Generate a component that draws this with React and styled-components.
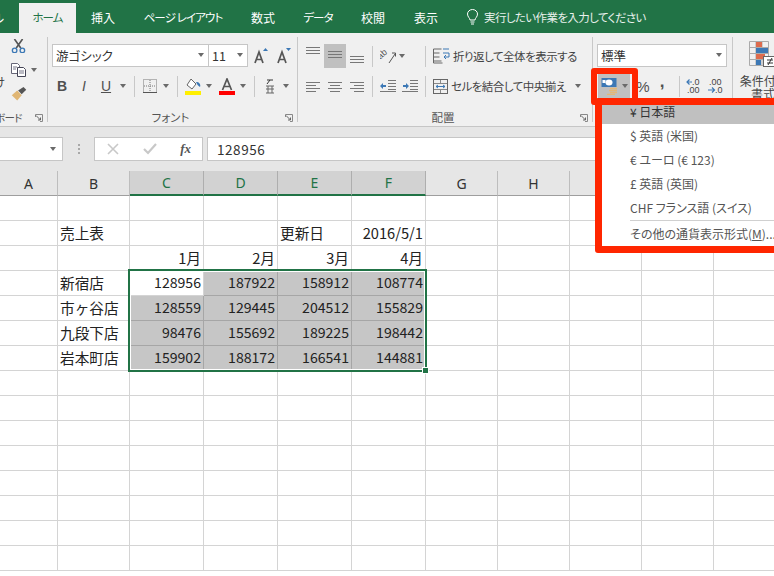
import React from "react"
import styled, { createGlobalStyle } from "styled-components"

const Global = createGlobalStyle`
	html, body { margin: 0; padding: 0; background: #fff; }
	body { font-family: "Noto Sans CJK JP", "Noto Sans", sans-serif; }
`

const Page = styled.div`
	position: relative;
	width: 774px;
	height: 576px;
	overflow: hidden;
	font-feature-settings: "palt";
`

const TabBar = styled.div`
	display: flex;
	align-items: flex-end;
	height: 33px;
	background: #217346;
	color: #fff;
	font-size: 12px;
`

const Tab = styled.div`
	flex: none;
	display: flex;
	align-items: center;
	justify-content: center;
	width: ${p => p.$w}px;
	height: 30px;
	padding-bottom: 2px;
	box-sizing: border-box;
	white-space: pre;
	overflow: hidden;
	font-size: ${p => (p.$kana ? "11.5px" : "12px")};
	letter-spacing: ${p => (p.$kana ? "-0.9px" : "0")};
	background: ${p => (p.$active ? "#f0f0f0" : "transparent")};
	color: ${p => (p.$active ? "#217346" : "#fff")};
`

const CutTab = styled(Tab)`
	justify-content: flex-end;
	padding-right: 15px;
`

const TellMe = styled.div`
	display: flex;
	align-items: center;
	gap: 5px;
	height: 30px;
	padding: 0 0 2px 14px;
	box-sizing: border-box;
	font-size: 11.5px;
	letter-spacing: -0.6px;
	color: #e8f0ec;
`

const Ribbon = styled.div`
	display: flex;
	height: 94px;
	padding-top: 4px;
	box-sizing: border-box;
	background: #f0f0f0;
	border-bottom: 1px solid #c6c6c6;
	color: #444;
	font-size: 12px;
	overflow: hidden;
`

const Group = styled.div`
	flex: none;
	display: flex;
	flex-direction: column;
	width: ${p => p.$w}px;
	height: 85px;
	padding-top: 7px;
	box-sizing: border-box;
	border-right: 1px solid #c8c8c8;
	white-space: nowrap;
`

const Rows = styled.div`
	display: flex;
	flex-direction: column;
	gap: 6px;
	height: 54px;
`

const Row = styled.div`
	display: flex;
	align-items: center;
	height: 24px;
	margin-left: ${p => p.$ml || 0}px;
`

const ClipBody = styled.div`
	display: flex;
	height: 54px;
`

const PasteLabel = styled.div`
	flex: none;
	display: flex;
	justify-content: flex-end;
	width: 5px;
	margin-top: 29px;
	overflow: hidden;
`

const ClipTools = styled.div`
	display: flex;
	flex-direction: column;
	align-items: flex-start;
	gap: 5px;
	height: 62px;
	margin: -5px 0 0 6px;
`

const CopyRow = styled.div`
	display: flex;
	align-items: center;
	height: 24px;
`

const Foot = styled.div`
	display: grid;
	grid-template-columns: 1fr auto 1fr;
	align-items: center;
	flex: none;
	height: 18px;
	margin-top: 10px;
	padding-right: 4px;
	font-size: 11.5px;
	color: #555;
`

const ClipFoot = styled(Foot)`
	display: flex;
	justify-content: flex-end;
	gap: 13px;
	font-size: 10.5px;
	letter-spacing: -0.6px;
`

const Launch = styled.svg`
	flex: none;
	justify-self: end;
	align-self: end;
	width: 8px;
	height: 8px;
	margin-bottom: 4px;
`

const Btn = styled.div`
	flex: none;
	display: flex;
	align-items: center;
	justify-content: center;
	gap: ${p => p.$gap || 0}px;
	margin-left: ${p => p.$ml || 0}px;
	width: ${p => p.$w || 22}px;
	height: 24px;
	background: ${p => (p.$on ? "#c0c0c0" : "transparent")};
`

const Letter = styled.span`
	font-family: "Liberation Sans", sans-serif;
	font-size: 14px;
	font-weight: ${p => (p.$bold ? 700 : 400)};
	font-style: ${p => (p.$italic ? "italic" : "normal")};
	text-decoration: ${p => (p.$under ? "underline" : "none")};
	color: #505050;
`

const Percent = styled(Letter)`
	font-size: 15px;
`

const Comma = styled(Letter)`
	font-size: 17px;
	font-weight: 700;
	margin-bottom: 9px;
`

const Caret = styled.span`
	flex: none;
	width: 0;
	height: 0;
	border-left: 3.5px solid transparent;
	border-right: 3.5px solid transparent;
	border-top: 4px solid #6a6a6a;
`

const CaretBtn = styled(Btn)`
	width: ${p => p.$w || 10}px;
	justify-content: ${p => (p.$start ? "flex-start" : "center")};
`

const Sep = styled.span`
	flex: none;
	width: 1px;
	height: 21px;
	margin: 0 4px 0 ${p => p.$l || 4}px;
	background: #c8c8c8;
`

const Combo = styled.div`
	flex: none;
	display: flex;
	align-items: center;
	justify-content: space-between;
	width: ${p => p.$w}px;
	height: 23px;
	margin-left: ${p => p.$ml || 0}px;
	margin-bottom: 1px;
	padding: 0 4px 1px 3px;
	box-sizing: border-box;
	background: #fff;
	border: 1px solid #c6c6c6;
	font-size: 12.5px;
	color: #333;
`

const TextBtn = styled.div`
	flex: none;
	display: flex;
	align-items: center;
	gap: 3px;
	padding-left: 3px;
	font-size: 11.5px;
	letter-spacing: -0.5px;
`

const BigBtn = styled.div`
	display: flex;
	flex-direction: column;
	align-items: center;
	width: 60px;
	margin-top: -3px;
	line-height: 13px;
	font-size: 12px;
	color: #444;
`

const BigLabel = styled.div`
	margin-top: 7px;
	text-align: center;
`

const FormulaBand = styled.div`
	display: flex;
	align-items: center;
	height: 44px;
	background: #e6e6e6;
`

const FormulaBox = styled.div`
	flex: none;
	display: flex;
	align-items: center;
	height: 24px;
	box-sizing: border-box;
	background: #fff;
	border: 1px solid #c6c6c6;
`

const NameBox = styled(FormulaBox)`
	width: 64px;
	margin-left: -1px;
	justify-content: flex-end;
	padding-right: 6px;
`

const Grip = styled.span`
	flex: none;
	width: 2px;
	height: 10px;
	margin: 0 14px 0 15px;
	background: repeating-linear-gradient(#a8a8a8 0 2px, transparent 2px 4px);
`

const FxBox = styled(FormulaBox)`
	width: 109px;
	justify-content: space-between;
	padding: 0 11px 0 12px;
`

const Fx = styled.span`
	font-family: "Liberation Serif", serif;
	font-style: italic;
	font-weight: 700;
	font-size: 13px;
	color: #555;
`

const InputBox = styled(FormulaBox)`
	flex: 1;
	margin: 0 -2px 0 4px;
	padding-left: 9px;
	font-size: 13.5px;
	letter-spacing: 0.55px;
	color: #333;
`

const Sheet = styled.div`
	position: relative;
	display: grid;
	grid-template-columns: 58px 72px 74px 74px 74px 74px 72px 72px 72px 72px 72px;
	grid-auto-rows: 25px;
`

const Head = styled.div`
	display: flex;
	align-items: center;
	justify-content: center;
	box-sizing: border-box;
	background: ${p => (p.$on ? "#d2d2d2" : "#e6e6e6")};
	color: ${p => (p.$on ? "#217346" : "#333")};
	border-right: 1px solid ${p => (p.$on ? "#aeaeae" : "#bdbdbd")};
	border-bottom: ${p => (p.$on ? "2px solid #217346" : "1px solid #9e9e9e")};
	font-family: "Noto Sans", sans-serif;
	font-size: 14px;
`

const Cell = styled.div`
	display: flex;
	align-items: center;
	justify-content: ${p => (p.$right ? "flex-end" : "flex-start")};
	box-sizing: border-box;
	padding: 0 2px 2px 2px;
	background: ${p => (p.$sel ? "#c6c6c6" : "#fff")};
	border-right: 1px solid ${p => (p.$sel ? "#a6a6a6" : "#d4d4d4")};
	border-bottom: 1px solid ${p => (p.$sel ? "#a6a6a6" : "#d4d4d4")};
	color: #222;
	font-size: ${p => (p.$num ? "14.1px" : "14.67px")};
	font-feature-settings: normal;
	white-space: nowrap;
	overflow: hidden;
`

const Selection = styled.div`
	position: absolute;
	grid-column: 3 / 7;
	grid-row: 5 / 9;
	top: -2px;
	left: -2px;
	right: -1px;
	bottom: -1px;
	border: 2px solid #217346;
	box-shadow: inset 0 0 0 1px #fff;
	pointer-events: none;
`

const Handle = styled.span`
	position: absolute;
	right: -4px;
	bottom: -4px;
	width: 5px;
	height: 5px;
	background: #217346;
	border: 1px solid #fff;
`

const RedBox = styled.div`
	position: absolute;
	left: 591px;
	top: 68px;
	width: 47px;
	height: 37px;
	box-sizing: border-box;
	border: 6px solid #ff2600;
	border-radius: 3px;
`

const Menu = styled.div`
	position: absolute;
	left: 595px;
	top: 98px;
	width: 210px;
	height: 155px;
	box-sizing: border-box;
	border: 7px solid #ff2600;
	border-radius: 3px;
	background: #fff;
	color: #555;
	font-size: 12px;
`

const MenuRow = styled.div`
	display: flex;
	align-items: center;
	height: ${p => (p.$top ? 19 : 24)}px;
	box-sizing: border-box;
	padding: ${p => (p.$top ? "0 0 7px 28px" : "0 0 2px 28px")};
	background: ${p => (p.$on ? "#c0c0c0" : "transparent")};
	color: ${p => (p.$on ? "#333" : "#555")};
	white-space: pre;
`

const MenuLine = styled.div`
	height: 1px;
	margin: 0 0 1px 28px;
	background: #d0d0d0;
`

const Svg = ({ w = 16, h = 16, children }) => (
	<svg width={w} height={h} viewBox={`0 0 ${w} ${h}`} fill="none">
		{children}
	</svg>
)

const LauncherIcon = () => (
	<Launch viewBox="0 0 8 8" fill="none">
		<path d="M.5 3V.5H7.5V7.5H5" stroke="#888" />
		<path d="M1 1.5L5.5 6M5.5 3.5V6H3" stroke="#666" />
	</Launch>
)

const Bulb = () => (
	<Svg w={13} h={16}>
		<path d="M4 11c0-2-2.5-3-2.5-6a5 4.5 0 0 1 10 0c0 3-2.5 4-2.5 6z" stroke="#fff" />
		<path d="M4.5 13h4M5 15h3" stroke="#fff" />
	</Svg>
)

const Scissors = () => (
	<Svg w={15} h={16}>
		<path d="M3 0l7 10M12 0L5 10" stroke="#555" strokeWidth="1.8" />
		<circle cx="3.2" cy="12.6" r="2.5" stroke="#3c78b5" strokeWidth="1.5" />
		<circle cx="11.8" cy="12.6" r="2.5" stroke="#3c78b5" strokeWidth="1.5" />
	</Svg>
)

const CopyIcon = () => (
	<Svg w={16} h={14}>
		<path d="M.5.5h6l2 2v8H.5z" fill="#fff" stroke="#667" />
		<path d="M6.5 4.5h6l2 2v7h-8z" fill="#fff" stroke="#445" />
		<path d="M8 8h5M8 10h5M2 4h4M2 6h3" stroke="#778" />
	</Svg>
)

const Brush = () => (
	<Svg w={16} h={15}>
		<path d="M0 9l6-5 5 5-5 6z" fill="#e0b674" />
		<path d="M7 4l6-4 3 3-5 5z" fill="#555" />
	</Svg>
)

const GrowA = ({ up }) => (
	<Svg w={14} h={16}>
		<path d="M1 15L5 4l4 11M2.5 11.5h5" stroke="#555" strokeWidth="1.7" />
		<path d={up ? "M9 3l2.5-3L14 3z" : "M9 0h5l-2.5 3z"} fill="#3c78b5" />
	</Svg>
)

const BorderIcon = () => (
	<Svg w={14} h={14}>
		<rect x=".5" y=".5" width="13" height="13" stroke="#777" strokeDasharray="1 1" />
		<path d="M7 1v12M1 7h12" stroke="#777" strokeDasharray="1 1" />
		<path d="M0 13.5h14" stroke="#555" />
	</Svg>
)

const FillIcon = () => (
	<Svg w={16} h={17}>
		<path d="M6 1l5 5-4 5-5-4z" fill="#fff" stroke="#666" />
		<path d="M11 4c3 0 5 2 4 5-2-1-3-3-4-5z" fill="#3c78b5" />
		<rect y="13" width="16" height="4" fill="#ffef00" />
	</Svg>
)

const ColorA = () => (
	<Svg w={16} h={17}>
		<path d="M3.5 12L8 1l4.5 11M5 8.5h6" stroke="#555" strokeWidth="1.7" />
		<rect y="13" width="16" height="4" fill="#f00" />
	</Svg>
)

const FuriIcon = () => (
	<Svg w={10} h={16}>
		<path d="M2 2h6M5 2L2 6" stroke="#333" />
		<path d="M1 8h8M1 11h8M1 15h8M3 8v7M7 8v7" stroke="#666" />
	</Svg>
)

const Lines = ({ rows, top = 0 }) => (
	<Svg w={14} h={20}>
		{rows.map(([x, len], i) => (
			<path key={i} d={`M${x} ${top + i * 3 + 0.5}h${len}`} stroke="#777" />
		))}
	</Svg>
)

const OrientIcon = () => (
	<Svg w={17} h={16}>
		<text x="0" y="11" fontSize="9" fontFamily="Liberation Sans" fill="#555" transform="rotate(-42 1 11)">ab</text>
		<path d="M9 15l6-9M12 5h3.500v3.500" stroke="#555" />
	</Svg>
)

const IndentIcon = ({ inc }) => (
	<Svg w={16} h={12}>
		<path d="M8 .5h8M8 3.500h8M8 6.500h8M8 9.500h8M0 11.500h16" stroke="#777" />
		<path d={inc ? "M1 5h3V3l3 3-3 3V7H1z" : "M6 5H3V3L0 6l3 3V7h3z"} fill="#3c78b5" />
	</Svg>
)

const WrapIcon = () => (
	<Svg w={17} h={16}>
		<path d="M.5 1h8M.5 5h6M.5 9h6M.5 13h8" stroke="#666" />
		<path d="M.5 1v14h9" stroke="#666" />
		<path d="M10 1h6M10 5h6v4h-5M13 7l-2 2 2 2" stroke="#3c78b5" />
	</Svg>
)

const MergeIcon = () => (
	<Svg w={15} h={15}>
		<rect x=".5" y=".5" width="14" height="14" stroke="#666" />
		<path d="M1 4.500h13M1 10.500h13M7.500 1v3M7.500 11v3" stroke="#888" />
		<path d="M3 7.500h9M3 7.500l2-1.500M3 7.500L5 9M12 7.500L10 6M12 7.500L10 9" stroke="#3c78b5" />
	</Svg>
)

const CurrencyIcon = () => (
	<Svg w={17} h={18}>
		<rect x=".5" y="1" width="15" height="9" fill="#3c78b5" />
		<ellipse cx="8" cy="5.500" rx="3.500" ry="3" fill="#fff" />
		<rect x="1.500" y="3" width="3" height="3" fill="#fff" />
		<path d="M9 11.500h7M8 13.500h8M9 15.500h7M6 17.500h8" stroke="#e4b877" strokeWidth="1.500" />
	</Svg>
)

const DecimalIcon = ({ inc }) => (
	<Svg w={18} h={16}>
		<text x={inc ? 1 : 6} y="7" fontSize="9" fontFamily="Liberation Sans" fill="#444">
			{inc ? ".00" : ".0"}
		</text>
		<text x={inc ? 7 : 1} y="15" fontSize="9" fontFamily="Liberation Sans" fill="#444">
			{inc ? ".0" : ".00"}
		</text>
		<path d={inc ? "M0 12h6M4 9.500L6.500 12 4 14.500" : "M6 4H1M3.500 1.500L1 4l2.500 2.500"} stroke="#3c78b5" strokeWidth="1.200" />
	</Svg>
)

const CondIcon = () => (
	<Svg w={28} h={26}>
		<path d="M.5.5h19v24H.5zM.5 6.500h19M.5 12.500h19M.5 18.500h19M7 .5v24M13 .5v24" stroke="#aaa" />
		<rect x="7" y="1" width="6" height="5" fill="#dd6b4d" />
		<rect x="7" y="7" width="12" height="5" fill="#3c78b5" />
		<rect x="7" y="13" width="9" height="5" fill="#dd6b4d" />
		<rect x="7" y="19" width="5" height="5" fill="#3c78b5" />
		<rect x="14.500" y="15.500" width="13" height="10" fill="#fff" stroke="#666" />
		<path d="M18 19h6M18 22h6M23 17l-4 7" stroke="#333" />
	</Svg>
)

const Cross = () => (
	<Svg w={12} h={12}>
		<path d="M1 1l10 10M11 1L1 11" stroke="#c8c8c8" strokeWidth="1.600" />
	</Svg>
)

const Check = () => (
	<Svg w={14} h={12}>
		<path d="M1 6l4 4 8-9" stroke="#c8c8c8" strokeWidth="2.200" />
	</Svg>
)

const columns = ["A", "B", "C", "D", "E", "F", "G", "H", "I", "J", "K"]
const selectedCols = ["C", "D", "E", "F"]

const rows = [
	{},
	{ B: "売上表", E: "更新日", F: { v: "2016/5/1", right: true } },
	{ C: "1月", D: "2月", E: "3月", F: "4月", right: true },
	{ B: "新宿店", values: [128956, 187922, 158912, 108774] },
	{ B: "市ヶ谷店", values: [128559, 129445, 204512, 155829] },
	{ B: "九段下店", values: [98476, 155692, 189225, 198442] },
	{ B: "岩本町店", values: [159902, 188172, 166541, 144881] },
	{}, {}, {}, {}, {}, {}, {}, {},
]

const renderCell = (row, rowIndex, col) => {
	const key = `${col}${rowIndex}`
	const valueIndex = selectedCols.indexOf(col)
	if (row.values && valueIndex >= 0) {
		return (
			<Cell key={key} $right $num $sel={!(rowIndex === 3 && col === "C")}>
				{row.values[valueIndex]}
			</Cell>
		)
	}
	const item = row[col]
	if (item && item.v) {
		return <Cell key={key} $right={item.right}>{item.v}</Cell>
	}
	return <Cell key={key} $right={row.right}>{item}</Cell>
}

const App = () => {
	return (
		<Page>
			<Global />
			<TabBar>
				<CutTab $w={19}>ル</CutTab>
				<Tab $w={57} $active $kana>ホーム</Tab>
				<Tab $w={54}>挿入</Tab>
				<Tab $w={106} $kana>ページ レイアウト</Tab>
				<Tab $w={54}>数式</Tab>
				<Tab $w={56} $kana>データ</Tab>
				<Tab $w={54}>校閲</Tab>
				<Tab $w={52}>表示</Tab>
				<TellMe><Bulb />実行したい作業を入力してください</TellMe>
			</TabBar>

			<Ribbon>
				<Group $w={48}>
					<ClipBody>
						<PasteLabel><span>け</span></PasteLabel>
						<ClipTools>
							<Scissors />
							<CopyRow><CopyIcon /><CaretBtn $w={14}><Caret /></CaretBtn></CopyRow>
							<Brush />
						</ClipTools>
					</ClipBody>
					<ClipFoot>ボード<LauncherIcon /></ClipFoot>
				</Group>

				<Group $w={250}>
					<Rows>
						<Row $ml={4}>
							<Combo $w={157}>游ゴシック<Caret /></Combo>
							<Combo $w={40} $ml={-1}>11<Caret /></Combo>
							<Btn $w={26}><GrowA up /></Btn>
							<Btn $w={20}><GrowA /></Btn>
						</Row>
						<Row $ml={3}>
							<Btn><Letter $bold>B</Letter></Btn>
							<Btn><Letter $italic>I</Letter></Btn>
							<Btn><Letter $under>U</Letter></Btn>
							<CaretBtn $w={12}><Caret /></CaretBtn>
							<Sep $l={5} />
							<Btn><BorderIcon /></Btn>
							<CaretBtn><Caret /></CaretBtn>
							<Sep $l={6} />
							<Btn><FillIcon /></Btn>
							<CaretBtn><Caret /></CaretBtn>
							<Btn $ml={2}><ColorA /></Btn>
							<CaretBtn><Caret /></CaretBtn>
							<Sep $l={6} />
							<Btn><FuriIcon /></Btn>
							<CaretBtn><Caret /></CaretBtn>
						</Row>
					</Rows>
					<Foot><span />フォント<LauncherIcon /></Foot>
				</Group>

				<Group $w={295}>
					<Rows>
						<Row $ml={4}>
							<Btn><Lines rows={[[0, 14], [0, 14], [0, 14]]} top={1} /></Btn>
							<Btn $on><Lines rows={[[0, 14], [0, 14], [0, 14]]} top={5} /></Btn>
							<Btn><Lines rows={[[0, 14], [0, 14], [0, 14]]} top={10} /></Btn>
							<Sep />
							<Btn><OrientIcon /></Btn>
							<CaretBtn $w={22} $start><Caret /></CaretBtn>
							<Sep />
							<TextBtn><WrapIcon />折り返して全体を表示する</TextBtn>
						</Row>
						<Row $ml={4}>
							<Btn><Lines rows={[[0, 14], [0, 10], [0, 14], [0, 10]]} top={6} /></Btn>
							<Btn><Lines rows={[[0, 14], [2, 10], [0, 14], [2, 10]]} top={6} /></Btn>
							<Btn><Lines rows={[[0, 14], [4, 10], [0, 14], [4, 10]]} top={6} /></Btn>
							<Sep />
							<Btn><IndentIcon /></Btn>
							<Btn><IndentIcon inc /></Btn>
							<Sep />
							<TextBtn><MergeIcon />セルを結合して中央揃え</TextBtn>
							<CaretBtn $w={24}><Caret /></CaretBtn>
						</Row>
					</Rows>
					<Foot><span />配置<LauncherIcon /></Foot>
				</Group>

				<Group $w={140}>
					<Rows>
						<Row $ml={4}><Combo $w={130}>標準<Caret /></Combo></Row>
						<Row $ml={5}>
							<Btn $w={32} $on $gap={4}><CurrencyIcon /><Caret /></Btn>
							<Btn $w={26}><Percent>%</Percent></Btn>
							<Btn $w={12}><Comma>,</Comma></Btn>
							<Sep $l={11} />
							<Btn><DecimalIcon /></Btn>
							<Btn><DecimalIcon inc /></Btn>
						</Row>
					</Rows>
				</Group>

				<Group $w={80}>
					<BigBtn>
						<CondIcon />
						<BigLabel>条件付き<br />書式</BigLabel>
					</BigBtn>
				</Group>
			</Ribbon>

			<FormulaBand>
				<NameBox><Caret /></NameBox>
				<Grip />
				<FxBox><Cross /><Check /><Fx>fx</Fx></FxBox>
				<InputBox>128956</InputBox>
			</FormulaBand>

			<Sheet>
				{columns.map(col => (
					<Head key={col} $on={selectedCols.includes(col)}>{col}</Head>
				))}
				{rows.map((row, i) => columns.map(col => renderCell(row, i, col)))}
				<Selection><Handle /></Selection>
			</Sheet>

			<RedBox />
			<Menu>
				<MenuRow $top $on>¥ 日本語</MenuRow>
				<MenuRow>$ 英語 (米国)</MenuRow>
				<MenuRow>€ ユーロ (€ 123)</MenuRow>
				<MenuRow>£ 英語 (英国)</MenuRow>
				<MenuRow>CHF フランス語 (スイス)</MenuRow>
				<MenuLine />
				<MenuRow>その他の通貨表示形式(<u>M</u>)...</MenuRow>
			</Menu>
		</Page>
	)
}

export default App
